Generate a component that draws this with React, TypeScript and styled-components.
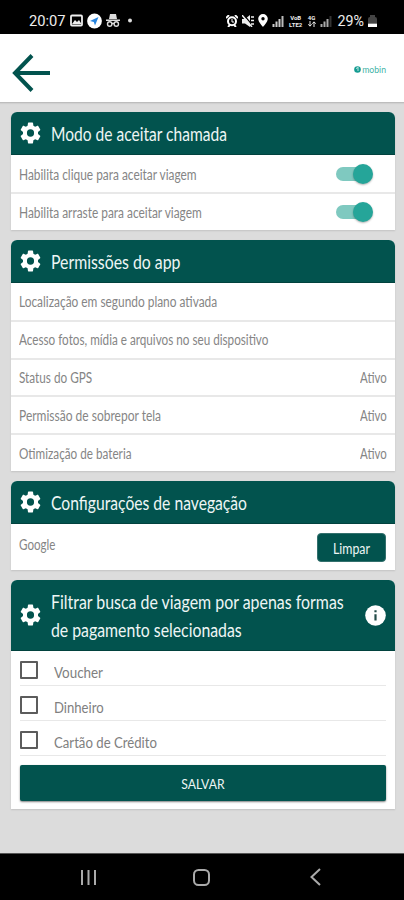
import React from "react";
import styled, { createGlobalStyle } from "styled-components";

const GREEN = "#02534e";

const GlobalStyle = createGlobalStyle`
  * { box-sizing: border-box; }
  body { margin: 0; background: #dcdcdc; font-family: "Lato", sans-serif; }
  svg { flex: none; display: block; }
`;

const Screen = styled.div`
  width: 404px;
  height: 900px;
  display: flex;
  flex-direction: column;
  background: #dcdcdc;
  overflow: hidden;
`;

const StatusBar = styled.div`
  height: 34px;
  flex: none;
  background: #000;
  color: #eee;
  display: flex;
  align-items: center;
  justify-content: space-between;
  padding: 7px 27px 0 29px;
  font: 15px/18px "Roboto", sans-serif;
`;

const StatusGroup = styled.div`
  display: flex;
  align-items: center;
  gap: 4px;
`;

const NetworkTag = styled.span<{ $width: number }>`
  width: ${(p) => p.$width}px;
  display: flex;
  flex-direction: column;
  align-items: center;
  font: bold 6px/7px "Roboto", sans-serif;
`;

const TopBar = styled.header`
  height: 69px;
  flex: none;
  background: #fff;
  border-bottom: 1px solid #bdbdbd;
  box-shadow: 0 1px 1px #d0d0d0;
  display: flex;
  align-items: center;
  justify-content: space-between;
  padding: 10px 18px 0 12px;
`;

const Brand = styled.div`
  display: flex;
  align-items: center;
  gap: 1px;
  margin-top: -7px;
  color: #3fb3a8;
  height: 9px;
`;

const Main = styled.main`
  flex: 1;
  padding: 9px 9px 0 11px;
  display: flex;
  flex-direction: column;
`;

const Card = styled.section<{ $height: number; $gap: number }>`
  height: ${(p) => p.$height}px;
  margin-bottom: ${(p) => p.$gap}px;
  background: #fff;
  border-radius: 6px 6px 0 0;
  box-shadow: 0 1px 2px rgba(0, 0, 0, 0.12);
  display: flex;
  flex-direction: column;
`;

const CardHeader = styled.div<{ $height?: number }>`
  height: ${(p) => p.$height ?? 43}px;
  flex: none;
  background: ${GREEN};
  color: #eef6f5;
  border-radius: 6px 6px 0 0;
  border-bottom: 1px solid #01423e;
  display: flex;
  align-items: center;
  padding: 0 9px;
`;

const TitleBlock = styled.div`
  flex: 1;
  min-width: 0;
  margin-left: 10px;
  padding-top: 2px;
`;

const Text = styled.span<{ $scale: number; $size?: number }>`
  display: block;
  white-space: nowrap;
  font-size: ${(p) => p.$size ?? 14.5}px;
  transform: scaleX(${(p) => p.$scale});
  transform-origin: left center;
`;

const Title = styled(Text)`
  font-size: 18.5px;
  line-height: 28px;
`;

const Row = styled.div`
  flex: 1;
  display: flex;
  align-items: center;
  justify-content: space-between;
  padding: 1px 8px 0;
  color: #858585;
  & + & { border-top: 2px solid #e8e8e8; padding-top: 0; }
`;

const Value = styled(Text)`
  transform-origin: right center;
`;

const Toggle = styled.div`
  width: 37px;
  height: 20px;
  margin-right: 14px;
  display: flex;
  align-items: center;
  justify-content: flex-end;
`;

const Track = styled.i`
  width: 27px;
  height: 14px;
  margin-right: -10px;
  border-radius: 7px;
  background: #7fc9c0;
`;

const Knob = styled.i`
  width: 20px;
  height: 20px;
  border-radius: 50%;
  background: #25a599;
  box-shadow: 0 1px 2px rgba(0, 0, 0, 0.3);
`;

const NavigationRow = styled.div`
  flex: 1;
  display: flex;
  justify-content: space-between;
  padding: 9px 9px 0 8px;
  color: #858585;
`;

const Provider = styled(Text)`
  margin-top: 3px;
`;

const ClearButton = styled.button`
  width: 69px;
  height: 29px;
  border: 1px solid #33706d;
  border-radius: 4px;
  background: ${GREEN};
  color: #eef6f5;
  font-family: inherit;
  padding: 2px 0 0 15px;
  text-align: left;
`;

const Options = styled.div`
  padding: 0 9px;
  display: flex;
  flex-direction: column;
`;

const Option = styled.label`
  height: 35px;
  display: flex;
  align-items: center;
  gap: 17px;
  padding-top: 8px;
  border-bottom: 1px solid #e8e8e8;
  color: #808080;
`;

const Box = styled.i`
  width: 18px;
  height: 18px;
  margin: -4px -1px 0 0;
  border: 2px solid #5c5c5c;
  border-radius: 1px;
`;

const SaveButton = styled.button`
  height: 36px;
  margin-top: 9px;
  border: 0;
  border-radius: 2px;
  background: ${GREEN};
  color: #eef6f5;
  font-family: inherit;
  box-shadow: 0 1px 2px rgba(0, 0, 0, 0.5);
  display: flex;
  align-items: center;
  justify-content: center;
  padding: 0;
`;

const SaveText = styled(Text)`
  transform-origin: center;
`;

const NavBar = styled.nav`
  height: 47px;
  flex: none;
  background: #000;
  border-top: 1px solid #555;
  display: grid;
  grid-template-columns: 113px 114px auto;
  align-items: center;
  padding-left: 80px;
`;

const Gear = () => (
  <svg width="21" height="22" viewBox="2 2 20 20" preserveAspectRatio="none" fill="#fff">
    <path d="M19.14 12.94c.04-.3.06-.61.06-.94s-.02-.64-.07-.94l2.03-1.58a.49.49 0 0 0 .12-.61l-1.92-3.32a.49.49 0 0 0-.59-.22l-2.39.96a7 7 0 0 0-1.62-.94l-.36-2.54a.48.48 0 0 0-.48-.41h-3.84a.47.47 0 0 0-.47.41l-.36 2.54c-.59.24-1.13.57-1.62.94l-2.39-.96a.48.48 0 0 0-.59.22L2.74 8.87a.47.47 0 0 0 .12.61l2.03 1.58a6 6 0 0 0-.02 1.88l-2.03 1.58a.49.49 0 0 0-.12.61l1.92 3.32c.12.22.37.29.59.22l2.39-.96c.5.38 1.03.7 1.62.94l.36 2.54c.05.24.24.41.48.41h3.84c.24 0 .44-.17.47-.41l.36-2.54a7 7 0 0 0 1.62-.94l2.39.96c.22.08.47 0 .59-.22l1.92-3.32a.47.47 0 0 0-.12-.61zM12 15.4a3.4 3.4 0 1 1 0-6.8 3.4 3.4 0 0 1 0 6.8z" />
  </svg>
);

const Info = () => (
  <svg width="21" height="21" viewBox="0 0 21 21">
    <circle cx="10.5" cy="10.5" r="10.3" fill="#fff" />
    <path d="M10.5 5.2v2M10.5 9.2v6.2" stroke="#234b48" strokeWidth="2.2" />
  </svg>
);

const Signal = ({ faint }: { faint?: boolean }) => (
  <svg width="12" height="12" viewBox="0 0 12 12">
    <path d="M1.5 12V9M4.5 12V6.5M7.5 12V4" stroke={faint ? "#aaa" : "#ccc"} strokeWidth="2" />
    <path d="M10.5 12V1" stroke={faint ? "#333" : "#bbb"} strokeWidth="2" />
  </svg>
);

const StatusIconsLeft = () => (
  <>
    <svg width="13" height="13" viewBox="0 0 13 13">
      <rect x="1" y="1.5" width="11" height="10" rx="1" fill="none" stroke="#eee" strokeWidth="1.8" />
      <path d="M2 10l3-4 2 2 2-2 2.5 4z" fill="#eee" />
    </svg>
    <svg width="15" height="16" viewBox="0 0 15 16">
      <circle cx="7.5" cy="8" r="7.4" fill="#fff" />
      <path d="M11.5 4L3 8l3.8 1 1.2 3.5z" fill="#2785e0" />
    </svg>
    <svg width="14" height="13" viewBox="0 0 14 13" fill="#ddd">
      <path d="M4 0h6l1 5H3zM0 5.5h14V7H0z" />
      <g fill="none" stroke="#ddd" strokeWidth="1.4">
        <circle cx="3.7" cy="10" r="2.2" />
        <circle cx="10.3" cy="10" r="2.2" />
        <path d="M6 9.5h2" />
      </g>
    </svg>
    <svg width="12" height="5" viewBox="0 0 12 5">
      <circle cx="6" cy="2.5" r="2" fill="#ddd" />
    </svg>
  </>
);

const Alarm = () => (
  <svg width="12" height="12" viewBox="0 0 12 12">
    <path d="M0 3l3-3M12 3L9 0M2 12l2-2M10 12l-2-2" stroke="#fff" strokeWidth="1.8" />
    <circle cx="6" cy="6.3" r="4" fill="none" stroke="#fff" strokeWidth="2" />
    <path d="M6 4v3h2" fill="none" stroke="#fff" />
  </svg>
);

const Muted = () => (
  <svg width="12" height="12" viewBox="0 0 12 12">
    <path d="M0 4h3L8 0v12L3 8.5H0z" fill="#eee" />
    <path d="M2 0l9 11" stroke="#000" strokeWidth="1.2" />
    <path d="M0 0l10 12M9 2h3M9 5.5h3M9 9h3" stroke="#eee" strokeWidth="1.5" />
  </svg>
);

const Pin = () => (
  <svg width="10" height="13" viewBox="0 0 10 13">
    <path d="M5 0a4.8 4.8 0 0 0-4.8 4.8C.2 8 5 13 5 13s4.8-5 4.8-8.2A4.8 4.8 0 0 0 5 0zm0 6.5a1.7 1.7 0 1 1 0-3.4 1.7 1.7 0 0 1 0 3.4z" fill="#fff" />
  </svg>
);

const Battery = () => (
  <svg width="9" height="12" viewBox="0 0 9 12">
    <path d="M0 8V4q0-2 2-2V0h5v2q2 0 2 2v4z" fill="#444" />
    <path d="M0 8.5h9V12H0z" fill="#fff" />
  </svg>
);

const Arrows = () => (
  <svg width="8" height="6" viewBox="0 0 8 6">
    <path d="M2 0v5M.3 3.3L2 5.2l1.7-1.9M6 6V1M4.3 2.7L6 .8l1.7 1.9" fill="none" stroke="#eee" />
  </svg>
);

const Switch = () => (
  <Toggle>
    <Track />
    <Knob />
  </Toggle>
);

const permissions = [
  { label: "Localização em segundo plano ativada", scale: 0.82 },
  { label: "Acesso fotos, mídia e arquivos no seu dispositivo", scale: 0.807 },
  { label: "Status do GPS", scale: 0.81, value: "Ativo" },
  { label: "Permissão de sobrepor tela", scale: 0.828, value: "Ativo" },
  { label: "Otimização de bateria", scale: 0.808, value: "Ativo" },
];

const payments = [
  { label: "Voucher", scale: 0.865 },
  { label: "Dinheiro", scale: 0.845 },
  { label: "Cartão de Crédito", scale: 0.85 },
];

export default function App() {
  return (
    <Screen>
      <GlobalStyle />
      <StatusBar>
        <StatusGroup>
          <Text $scale={0.98} $size={15}>20:07</Text>
          <StatusIconsLeft />
        </StatusGroup>
        <StatusGroup>
          <Alarm />
          <Muted />
          <Pin />
          <Signal />
          <NetworkTag $width={15}><span>VoB</span><span>LTE2</span></NetworkTag>
          <NetworkTag $width={9}><span>4G</span><Arrows /></NetworkTag>
          <Signal faint />
          <Value $scale={0.95} $size={15}>29%</Value>
          <Battery />
        </StatusGroup>
      </StatusBar>
      <TopBar>
        <svg width="38" height="38" viewBox="0 0 38 38">
          <path d="M20 1.5L3 19l17 17.5M3 19h35" fill="none" stroke={GREEN} strokeWidth="4" />
        </svg>
        <Brand>
          <svg width="7" height="7" viewBox="0 0 7 7">
            <circle cx="3.5" cy="3.5" r="3.3" fill="#159c92" />
            <path d="M4 1v4M2 2.5l2-1" stroke="#bce5e0" />
          </svg>
          <Text $scale={1} $size={8.7}>mobin</Text>
        </Brand>
      </TopBar>
      <Main>
        <Card $height={118} $gap={10}>
          <CardHeader>
            <Gear />
            <TitleBlock><Title $scale={0.841}>Modo de aceitar chamada</Title></TitleBlock>
          </CardHeader>
          <Row><Text $scale={0.82}>Habilita clique para aceitar viagem</Text><Switch /></Row>
          <Row><Text $scale={0.82}>Habilita arraste para aceitar viagem</Text><Switch /></Row>
        </Card>
        <Card $height={231} $gap={10}>
          <CardHeader>
            <Gear />
            <TitleBlock><Title $scale={0.855}>Permissões do app</Title></TitleBlock>
          </CardHeader>
          {permissions.map((item) => (
            <Row key={item.label}>
              <Text $scale={item.scale}>{item.label}</Text>
              {item.value && <Value $scale={0.79}>{item.value}</Value>}
            </Row>
          ))}
        </Card>
        <Card $height={89} $gap={10}>
          <CardHeader>
            <Gear />
            <TitleBlock><Title $scale={0.847}>Configurações de navegação</Title></TitleBlock>
          </CardHeader>
          <NavigationRow>
            <Provider $scale={0.8}>Google</Provider>
            <ClearButton><Text $scale={0.85}>Limpar</Text></ClearButton>
          </NavigationRow>
        </Card>
        <Card $height={229} $gap={0}>
          <CardHeader $height={71}>
            <Gear />
            <TitleBlock>
              <Title $scale={0.86}>Filtrar busca de viagem por apenas formas</Title>
              <Title $scale={0.855}>de pagamento selecionadas</Title>
            </TitleBlock>
            <Info />
          </CardHeader>
          <Options>
            {payments.map((item) => (
              <Option key={item.label}>
                <Box />
                <Text $scale={item.scale} $size={15.5}>{item.label}</Text>
              </Option>
            ))}
            <SaveButton><SaveText $scale={0.87} $size={14}>SALVAR</SaveText></SaveButton>
          </Options>
        </Card>
      </Main>
      <NavBar>
        <svg width="17" height="17" viewBox="0 0 17 17"><path d="M2 1v15M8.5 1v15M15 1v15" stroke="#aaa" strokeWidth="2" /></svg>
        <svg width="17" height="17" viewBox="0 0 17 17"><rect x="1" y="1" width="15" height="15" rx="4.5" fill="none" stroke="#aaa" strokeWidth="2" /></svg>
        <svg width="16" height="18" viewBox="0 0 16 18"><path d="M13 1L4.5 9l8.5 8" fill="none" stroke="#aaa" strokeWidth="2" /></svg>
      </NavBar>
    </Screen>
  );
}
